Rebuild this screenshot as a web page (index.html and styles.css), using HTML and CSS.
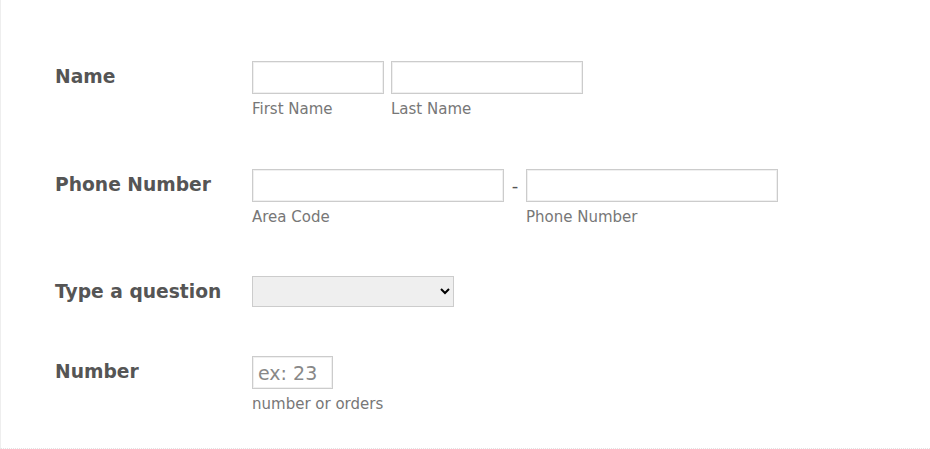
FILE: index.html
```html
<!DOCTYPE html>
<html lang="en">
<head>
    <meta charset="UTF-8">
    <title>Form</title>
    <link rel="stylesheet" href="styles.css">
</head>
<body>
<div class="form">
    <div class="row">
        <label class="label">Name</label>
        <div class="fields">
            <div class="field">
                <input type="text" class="input first">
                <span class="sub">First Name</span>
            </div>
            <div class="field">
                <input type="text" class="input last">
                <span class="sub">Last Name</span>
            </div>
        </div>
    </div>
    <div class="row row-phone">
        <label class="label">Phone Number</label>
        <div class="fields">
            <div class="field">
                <input type="text" class="input phone">
                <span class="sub">Area Code</span>
            </div>
            <span class="dash">-</span>
            <div class="field">
                <input type="text" class="input phone">
                <span class="sub">Phone Number</span>
            </div>
        </div>
    </div>
    <div class="row row-select">
        <label class="label">Type a question</label>
        <div class="fields">
            <select class="select">
                <option></option>
            </select>
        </div>
    </div>
    <div class="row">
        <label class="label">Number</label>
        <div class="fields">
            <div class="field">
                <input type="text" class="input num" placeholder="ex: 23">
                <span class="sub">number or orders</span>
            </div>
        </div>
    </div>
</div>
</body>
</html>
```

FILE: styles.css
```css
body {
    margin: 0;
    padding: 0;
    background-color: #ffffff;
    font-family: "DejaVu Sans", Verdana, sans-serif;
}

.form {
    height: 449px;
    border-left: 1px solid #eeeeee;
    border-bottom: 1px dotted #e4e4e4;
    padding-top: 61px;
    box-sizing: border-box;
}

.row {
    display: flex;
    align-items: flex-start;
    padding-left: 54px;
    margin-bottom: 51px;
}

.row-phone {
    margin-bottom: 50px;
}

.row-select {
    margin-bottom: 49px;
}

.label {
    width: 197px;
    font-size: 18.7px;
    font-weight: bold;
    color: #555555;
    line-height: 31px;
}

.fields {
    display: flex;
    align-items: flex-start;
}

.field {
    display: flex;
    flex-direction: column;
    margin-right: 7px;
}

.input {
    height: 33px;
    border: 1px solid #cccccc;
    box-shadow: inset 0 0 0 1px #f0f0f0;
    box-sizing: border-box;
    padding: 0 5px;
    font-family: "DejaVu Sans", Verdana, sans-serif;
    font-size: 19px;
    color: #555555;
    outline: none;
}

.input::placeholder {
    color: #888888;
}

.first { width: 132px; }
.last { width: 192px; }
.phone { width: 252px; }
.num { width: 81px; }

.sub {
    font-size: 15px;
    color: #777777;
    margin-top: 7px;
    line-height: 17px;
}

.dash {
    width: 22px;
    margin-left: -7px;
    text-align: center;
    font-size: 18px;
    line-height: 33px;
    color: #555555;
}

.select {
    width: 202px;
    height: 31px;
    border: 1px solid #cccccc;
    background-color: #efefef;
    font-family: "DejaVu Sans", Verdana, sans-serif;
    font-size: 14px;
}
```
